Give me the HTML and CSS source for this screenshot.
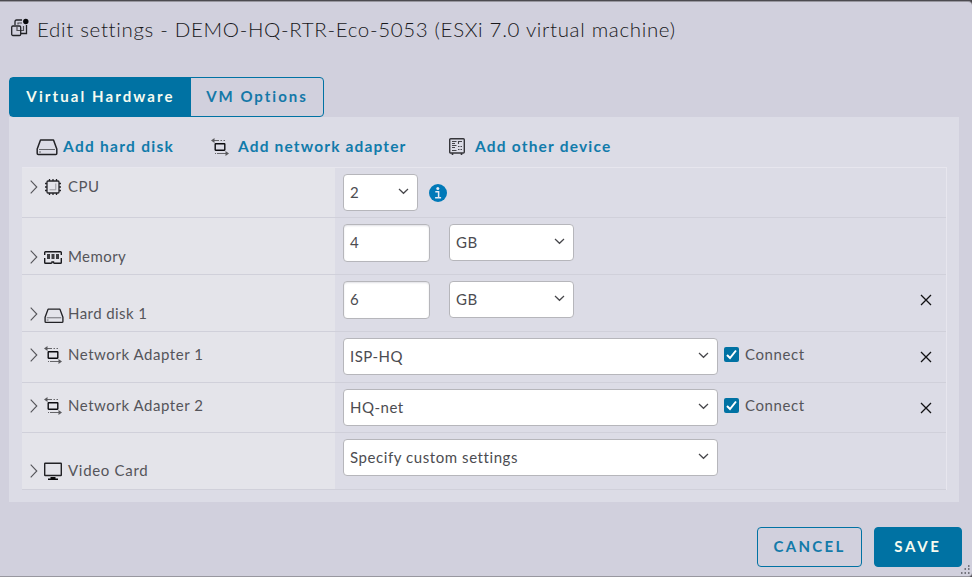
FILE: index.html
```html
<!DOCTYPE html>
<html lang="en">
<head>
<meta charset="utf-8">
<title>Edit settings</title>
<link rel="stylesheet" href="styles.css">
</head>
<body>
<svg class="defs" width="0" height="0" aria-hidden="true">
  <symbol id="disk" viewBox="0 0 22 18">
    <path d="M4.500 2h13l3.300 9v4.500q0 1-1 1h-17.600q-1 0-1-1v-4.500z" fill="none" stroke="#222226" stroke-width="1.500" stroke-linejoin="round"/>
    <path d="M3 11.500h16M3 14h2" stroke="#65656a" stroke-width="1"/>
  </symbol>
  <symbol id="network" viewBox="0 0 18 18">
    <path d="M1.500 2.500h6.500M9.500 2.500h1.500M12.500 2.500h1.500M4 15.500h1M6 15.500h6M12 15.500h5" stroke="#66666a" stroke-width="1.100"/>
    <path d="M3.500 0L0 2.500l3.500 2.500zM14.500 13l3.500 2.500-3.500 2.500z" fill="#59595d"/>
    <rect x="4.200" y="5.700" width="9.600" height="6.500" rx=".4" fill="none" stroke="#0c0c10" stroke-width="1.400"/>
  </symbol>
  <symbol id="caret" viewBox="0 0 8 14"><path d="M.7.700L6.800 7 .7 13.300" fill="none" stroke="#55555a" stroke-width="1.100"/></symbol>
  <symbol id="down" viewBox="0 0 11 7"><path d="M1 1l4.500 4.300L10 1" fill="none" stroke="#47474b" stroke-width="1.200"/></symbol>
  <symbol id="close" viewBox="0 0 12 12"><path d="M1 1l10 10M11 1L1 11" stroke="#111114" stroke-width="1.300"/></symbol>
</svg>
<main class="dialog">
  <header class="head">
    <svg class="vm" width="20" height="20" viewBox="0 0 20 20">
      <path d="M5 7V3.500Q5 2 6.500 2H12M16.500 7v8.500H11" fill="none" stroke="#222226" stroke-width="1.300"/>
      <path d="M8 6.500V5h4M13.500 8v4.500H7V9" fill="none" stroke="#4d4d52" stroke-width="1.200"/>
      <rect x="1.700" y="8" width="9" height="9.500" rx="1.200" fill="none" stroke="#222226" stroke-width="1.300"/>
      <circle cx="15.800" cy="3.500" r="2.700" fill="#08080a"/>
    </svg>
    <h1>Edit settings - DEMO-HQ-RTR-Eco-5053 (ESXi 7.0 virtual machine)</h1>
  </header>
  <nav class="tabs"><button class="tab on"><span>Virtual Hardware</span></button><button class="tab"><span>VM Options</span></button></nav>
  <section class="panel">
    <div class="tools">
      <a class="tool t1"><svg width="22" height="18"><use href="#disk"/></svg><span>Add hard disk</span></a>
      <a class="tool t2"><svg width="18" height="18"><use href="#network"/></svg><span>Add network adapter</span></a>
      <a class="tool t3"><svg width="16" height="17" viewBox="0 0 16 17">
        <rect x=".7" y=".7" width="14.600" height="14.300" rx="1" fill="none" stroke="#35353a" stroke-width="1.400"/>
        <path d="M3.500 15v2M12.500 15v2" stroke="#35353a" stroke-width="1.600"/>
        <path d="M3 3.500h4.500M3 5.500h3M3 7.500h4.500M3 9.500h3M3 12.500h4.500M9.500 6V3.500H13M9 8.500h1.500M11.500 8.500H13M9 11.500h1.500M11.500 11.500H13" fill="none" stroke="#45454a" stroke-width="1.100"/>
      </svg><span>Add other device</span></a>
    </div>
    <div class="table">
      <div class="row r-cpu">
        <div class="label"><svg class="caret"><use href="#caret"/></svg><svg class="icon" width="18" height="18" viewBox="0 0 18 18">
          <rect x="3" y="3" width="12" height="12" rx="1" fill="none" stroke="#242428" stroke-width="1.300"/>
          <path d="M5.500 1v2M9 1v2M12.500 1v2M5.500 15v2M9 15v2M12.500 15v2M1 5.500h2M1 9h2M1 12.500h2M15 5.500h2M15 9h2M15 12.500h2" stroke="#242428" stroke-width="1.300"/>
          <path d="M11.800 5.500v6.300H5.500" fill="none" stroke="#99999e"/>
        </svg><span>CPU</span></div>
        <div class="cell"><div class="field select xs"><span>2</span><svg><use href="#down"/></svg></div>
          <svg class="info" width="18" height="18" viewBox="0 0 18 18"><circle cx="9" cy="9" r="9" fill="#0079b8"/><circle cx="8.800" cy="4.400" r="1.500" fill="#e4eaf5"/><path d="M6.300 7.700h3.300v5.800M6.100 13.700h6" fill="none" stroke="#e4eaf5" stroke-width="1.500"/></svg></div>
      </div>
      <div class="row r-size">
        <div class="label"><svg class="caret"><use href="#caret"/></svg><svg class="icon" width="18" height="13" viewBox="0 0 18 13">
          <path d="M.7 4V1.500q0-.8.8-.8h15q.8 0 .8.800V4M.7 7v4.500q0 .8.800.800h5.500q1 0 1-1.300h1.500q0 1.300 1 1.300h6q.8 0 .8-.8V7" fill="none" stroke="#19191d" stroke-width="1.400"/>
          <path d="M4.500 3v5M9 3v5M13.500 3v5" stroke="#3c3c40" stroke-width="3"/>
        </svg><span>Memory</span></div>
        <div class="cell"><div class="field number">4</div><div class="field select sm"><span>GB</span><svg><use href="#down"/></svg></div></div>
      </div>
      <div class="row r-size">
        <div class="label disk"><svg class="caret"><use href="#caret"/></svg><svg class="icon" width="20" height="17"><use href="#disk"/></svg><span>Hard disk 1</span></div>
        <div class="cell"><div class="field number">6</div><div class="field select sm"><span>GB</span><svg><use href="#down"/></svg></div><svg class="close"><use href="#close"/></svg></div>
      </div>
      <div class="row r-net">
        <div class="label"><svg class="caret"><use href="#caret"/></svg><svg class="icon" width="18" height="18"><use href="#network"/></svg><span>Network Adapter 1</span></div>
        <div class="cell"><div class="field select lg"><span>ISP-HQ</span><svg><use href="#down"/></svg></div>
          <label class="check"><svg width="15" height="15" viewBox="0 0 15 15"><rect width="15" height="15" rx="2" fill="#0072a3"/><path d="M3 8l3 3 6-7.500" fill="none" stroke="#fff" stroke-width="2"/></svg><span>Connect</span></label><svg class="close"><use href="#close"/></svg></div>
      </div>
      <div class="row r-net last-net">
        <div class="label"><svg class="caret"><use href="#caret"/></svg><svg class="icon" width="18" height="18"><use href="#network"/></svg><span>Network Adapter 2</span></div>
        <div class="cell"><div class="field select lg"><span>HQ-net</span><svg><use href="#down"/></svg></div>
          <label class="check"><svg width="15" height="15" viewBox="0 0 15 15"><rect width="15" height="15" rx="2" fill="#0072a3"/><path d="M3 8l3 3 6-7.500" fill="none" stroke="#fff" stroke-width="2"/></svg><span>Connect</span></label><svg class="close"><use href="#close"/></svg></div>
      </div>
      <div class="row r-video">
        <div class="label"><svg class="caret"><use href="#caret"/></svg><svg class="icon" width="18" height="18" viewBox="0 0 18 18">
          <rect x=".7" y="1.200" width="16.600" height="12.300" rx=".5" fill="none" stroke="#222226" stroke-width="1.400"/><path d="M6.500 15h5v1.500H14V18H4v-1.500h2.500z" fill="#08080a"/></svg><span class="video">Video Card</span></div>
        <div class="cell"><div class="field select lg custom"><span>Specify custom settings</span><svg><use href="#down"/></svg></div></div>
      </div>
    </div>
  </section>
  <footer class="foot"><button class="btn cancel"><span>CANCEL</span></button><button class="btn save"><span>SAVE</span></button></footer>
  <svg class="grip" width="12" height="10" viewBox="0 0 12 10"><path d="M8 1h1.500M4.500 4H6M8 4h1.500M1 8h1.500M4.500 8H6M8 8h1.500" stroke="#54545c" stroke-width="1.500"/></svg>
</main>
</body>
</html>
```

FILE: styles.css
```css
* { box-sizing: border-box; }
body { margin: 0; background: #4c4b50; font-family: Lato, "Liberation Sans", sans-serif; font-size: 15px; color: #55555a; }
.defs { position: absolute; }
svg { display: block; flex: none; }
span { white-space: nowrap; }
.dialog { position: relative; display: flex; flex-direction: column; width: 972px; height: 576px; margin-top: 1px; background: #d1d0dd; border-top: 1px solid #98979f; border-bottom: 1px solid #98979f; border-radius: 0 4px 4px 0; }
.head { display: flex; height: 75px; padding: 16px 0 0 10px; }
.head h1 { margin: -1px 0 0 7px; font-size: 20.500px; line-height: 25px; font-weight: 300; letter-spacing: .67px; white-space: nowrap; color: #18181b; }
.tabs { display: flex; height: 40px; margin-left: 9px; width: 315px; border: 1px solid #0072a3; border-radius: 4px; }
button { font-family: inherit; padding: 0 0 3px; border: 0; background: none; }
.tab { width: 132px; height: 38px; font-size: 15px; font-weight: 700; letter-spacing: 2px; color: #1478a8; }
.tab.on { width: 181px; letter-spacing: 2.100px; color: #f6fbf0; background: #0072a3; }
.panel { width: 950px; height: 385px; margin-left: 9px; padding: 0 13px; background: #dcdce6; }
.tools { display: flex; height: 50px; align-items: center; padding: 9px 0 0 14px; }
.tool { display: flex; align-items: center; font-weight: 700; font-size: 15.500px; color: #117bab; letter-spacing: 1.150px; }
.tool span { margin-top: -2px; }
.t1 { width: 175px; gap: 5px; letter-spacing: 1.280px; }
.t2 { width: 238px; gap: 9px; }
.t3 { gap: 10px; letter-spacing: 1.200px; }
.table { width: 925px; border-top: 1px solid #e7e6ee; border-right: 1px solid #e7e6ee; }
.row { display: grid; grid-template-columns: 313px 1fr; border-bottom: 1px solid #d0d0da; height: 57px; }
.r-cpu { height: 50px; }
.r-net { height: 51px; }
.last-net { height: 50px; }
.label { display: flex; height: 100%; align-items: flex-start; padding: 30px 0 0 8px; background: #e4e4ea; letter-spacing: .43px; line-height: 18px; }
.label span { margin-top: -1px; }
.label .video { letter-spacing: .7px; }
.r-cpu .label { padding-top: 10px; }
.r-net .label { padding-top: 14px; letter-spacing: .55px; }
.r-video .label { padding-top: 29px; }
.caret { width: 8px; height: 14px; margin: 2px 6px 0 0; }
.icon { margin-right: 6px; }
.r-size .icon { margin-top: 3px; }
.disk .icon { margin-right: 4px; margin-top: 2px; }
.cell { display: flex; align-items: flex-start; padding: 6px 0 0 8px; }
.field { height: 37px; border: 1px solid #b6b6bb; border-radius: 4px; background: #fff; padding: 0 6px; line-height: 34px; color: #4c4c51; letter-spacing: .5px; }
.number { width: 87px; height: 38px; line-height: 35px; margin-right: 19px; box-shadow: inset 0 1px 2px #e0e0e5; }
.select { display: flex; justify-content: space-between; }
.select svg { width: 11px; height: 7px; margin: 13px 2px 0 0; }
.xs { width: 75px; }
.sm { width: 125px; }
.lg { width: 375px; }
.custom { letter-spacing: .57px; }
.info { margin: 10px 0 0 11px; }
.check { display: flex; gap: 6px; margin: 9px 0 0 6px; line-height: 16px; letter-spacing: .6px; }
.check span { margin-top: -1px; }
.close { width: 12px; height: 12px; margin: 13px 14px 0 auto; }
.foot { display: flex; justify-content: flex-end; gap: 12px; padding: 25px 10px 0 0; }
.btn { height: 40px; border: 1px solid #0072a3; border-radius: 4px; font-size: 15px; font-weight: 700; letter-spacing: 2.300px; color: #137aa9; }
.cancel { width: 105px; }
.save { width: 88px; background: #0072a3; color: #f6fbf0; letter-spacing: 2.700px; }
.grip { position: absolute; right: 0; bottom: 1px; }
```
